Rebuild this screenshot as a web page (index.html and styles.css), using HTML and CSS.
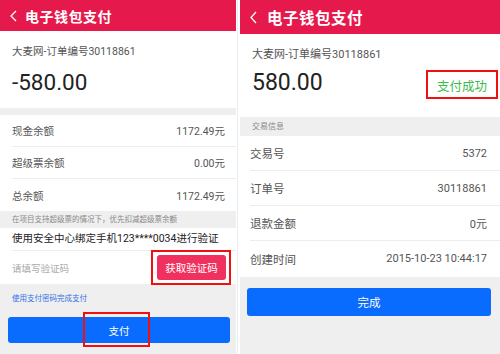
FILE: index.html
```html
<!DOCTYPE html>
<html lang="zh">
<head>
<meta charset="utf-8">
<link rel="stylesheet" href="styles.css">
</head>
<body>
<div class="page">
  <section class="panel left">
    <header class="bar">
      <svg class="back" width="7" height="12" viewBox="0 0 7 12"><path d="M6 1 L1 6 L6 11" fill="none" stroke="#fff" stroke-width="1.3"/></svg>
      <span class="bar-title">电子钱包支付</span>
    </header>
    <div class="summary">
      <div class="order">大麦网-订单编号30118861</div>
      <div class="amount">-580.00</div>
    </div>
    <div class="spacer"></div>
    <div class="rows">
      <div class="row"><span>现金余额</span><span class="val">1172.49元</span></div>
      <div class="row"><span>超级票余额</span><span class="val">0.00元</span></div>
      <div class="row last"><span>总余额</span><span class="val">1172.49元</span></div>
    </div>
    <div class="note">在项目支持超级票的情况下，优先扣减超级票余额</div>
    <div class="verify">
      <div class="verify-text">使用安全中心绑定手机123****0034进行验证</div>
      <div class="code-row">
        <span class="placeholder">请填写验证码</span>
        <span class="code-btn">获取验证码<span class="mark mark-code"></span></span>
      </div>
    </div>
    <div class="foot">
      <div class="link">使用支付密码完成支付</div>
      <div class="btn pay">支付<span class="mark mark-pay"></span></div>
    </div>
  </section>
  <div class="divider"></div>
  <section class="panel right">
    <header class="bar tall">
      <svg class="back" width="7" height="13" viewBox="0 0 7 13"><path d="M6 1 L1 6.5 L6 12" fill="none" stroke="#fff" stroke-width="1.3"/></svg>
      <span class="bar-title">电子钱包支付</span>
    </header>
    <div class="summary r-summary">
      <div class="order">大麦网-订单编号30118861</div>
      <div class="amount-line">
        <div class="amount">580.00</div>
        <div class="status">支付成功<span class="mark mark-status"></span></div>
      </div>
    </div>
    <div class="section-head">交易信息</div>
    <div class="rows r-rows">
      <div class="row"><span>交易号</span><span class="val">5372</span></div>
      <div class="row"><span>订单号</span><span class="val">30118861</span></div>
      <div class="row"><span>退款金额</span><span class="val">0元</span></div>
      <div class="row last"><span>创建时间</span><span class="val">2015-10-23 10:44:17</span></div>
    </div>
    <div class="foot r-foot">
      <div class="btn done">完成</div>
    </div>
  </section>
</div>
</body>
</html>
```
FILE: styles.css
```css
html, body {
  margin: 0;
  padding: 0;
  background: #fff;
}
body {
  width: 500px;
  height: 354px;
  overflow: hidden;
  font-family: "Roboto", "Noto Sans CJK SC", sans-serif;
}
.page {
  display: flex;
  width: 500px;
  height: 354px;
}
.panel {
  display: flex;
  flex-direction: column;
  background: #efefef;
  height: 354px;
}
.left { width: 236px; }
.right { width: 260px; }
.divider {
  width: 4px;
  background: linear-gradient(to right, #fff 1px, #eaeef4 1px, #eaeef4 2px, #fff 2px);
}
.bar {
  height: 31px;
  background: #e5194b;
  display: flex;
  align-items: center;
  padding-left: 10px;
  box-sizing: border-box;
  color: #fff;
  flex-shrink: 0;
}
.bar .back { margin-right: 8px; }
.bar-title {
  font-size: 14px;
  font-weight: bold;
  letter-spacing: 0.5px;
}
.bar.tall { height: 34px; }
.bar.tall .back { margin-right: 10px; }
.bar.tall .bar-title { font-size: 15.5px; }

.summary {
  background: #fff;
  height: 77px;
  box-sizing: border-box;
  padding: 13px 12px 0;
}
.order {
  font-size: 10.5px;
  color: #555;
  line-height: 16px;
}
.amount {
  font-size: 22.5px;
  color: #222;
  line-height: 28px;
  margin-top: 8px;
}
.spacer { height: 7px; }
.rows {
  background: #fff;
}
.row {
  height: 31px;
  margin-left: 12px;
  padding-right: 11px;
  border-bottom: 1px solid #ececec;
  display: flex;
  align-items: center;
  justify-content: space-between;
  font-size: 10.5px;
  color: #555;
}
.row.last { border-bottom: none; height: 32px; }
.row .val { color: #555; }
.note {
  height: 17px;
  line-height: 17px;
  padding-left: 12px;
  font-size: 7.5px;
  color: #888;
}
.verify { background: #fff; }
.verify-text {
  height: 22px;
  line-height: 22px;
  margin-left: 12px;
  font-size: 10.5px;
  color: #222;
  border-bottom: 1px solid #ececec;
}
.code-row {
  height: 33px;
  display: flex;
  align-items: center;
  justify-content: space-between;
  padding: 0 10px 0 12px;
}
.placeholder {
  font-size: 9.5px;
  color: #aaa;
}
.code-btn {
  position: relative;
  width: 69px;
  height: 25px;
  border-radius: 3px;
  background: #f0305e;
  color: #fff;
  font-size: 10.5px;
  display: flex;
  align-items: center;
  justify-content: center;
}
.mark {
  position: absolute;
  border: 2px solid #f01010;
  box-sizing: border-box;
}
.mark-code { left: -6px; top: -5px; right: -5px; bottom: -5px; }
.foot {
  flex: 1;
  padding: 0 6px 0 8px;
}
.link {
  font-size: 7.5px;
  color: #2f6fe6;
  padding: 10px 0 0 4px;
  line-height: 10px;
}
.btn {
  position: relative;
  background: #0a6cfe;
  border-radius: 3px;
  color: #fff;
  font-size: 10.5px;
  display: flex;
  align-items: center;
  justify-content: center;
}
.pay {
  height: 26px;
  margin-top: 13px;
}
.mark-pay { left: 75px; width: 67px; top: -5px; bottom: -4px; }

.r-summary {
  height: 83px;
  padding: 13px 12px 0;
}
.r-summary .order { font-size: 11px; }
.amount-line {
  display: flex;
  justify-content: space-between;
  align-items: flex-start;
}
.r-summary .amount {
  font-size: 23px;
  margin-top: 6px;
}
.status {
  position: relative;
  margin-top: 16px;
  margin-right: 1px;
  font-size: 12.5px;
  color: #3dba4e;
  line-height: 16px;
}
.mark-status { left: -11px; right: -11px; top: -9px; bottom: -4px; }
.section-head {
  height: 19px;
  line-height: 19px;
  padding-left: 12px;
  font-size: 8px;
  color: #888;
}
.r-rows { padding-bottom: 1px; }
.r-rows .row {
  height: 34px;
  margin-left: 10px;
  padding-right: 13px;
  font-size: 11.5px;
  color: #555;
}
.r-rows .row.last { height: 35px; }
.r-rows .val { font-size: 11px; }
.r-foot { padding: 0 9px 0 7px; }
.done {
  height: 28px;
  margin-top: 11px;
  font-size: 11.5px;
}
```
